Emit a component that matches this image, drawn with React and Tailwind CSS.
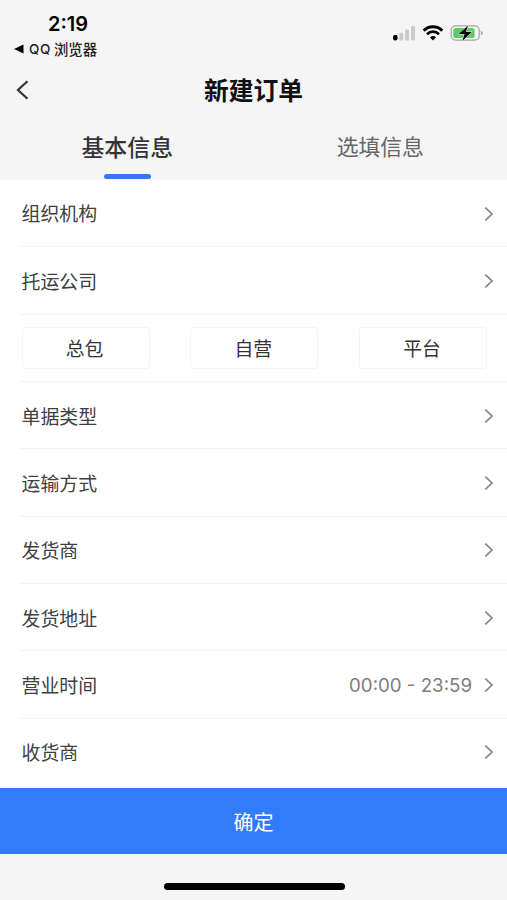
const rows = [
  { label: '组织机构' },
  { label: '托运公司' },
  { options: ['总包', '自营', '平台'] },
  { label: '单据类型' },
  { label: '运输方式' },
  { label: '发货商' },
  { label: '发货地址' },
  { label: '营业时间', value: '00:00 - 23:59' },
  { label: '收货商' },
];

function StatusIcons() {
  return (
    <svg width="92" height="20" viewBox="0 0 92 20" fill="none">
      <rect x="1" y="11" width="4.6" height="5.4" rx="1.8" fill="#000" />
      <rect x="7.3" y="8.8" width="4" height="7.6" rx="1" fill="#cbcbcb" />
      <rect x="13.1" y="5.5" width="4" height="10.9" rx="1" fill="#cbcbcb" />
      <rect x="19" y="2" width="4" height="14.4" rx="1" fill="#cbcbcb" />
      <path d="M31.7 6.6a13.2 13.2 0 0 1 18.6 0" stroke="#000" strokeWidth="3" />
      <path d="M35 10.2a8.5 8.5 0 0 1 12 0" stroke="#000" strokeWidth="2.7" />
      <path d="M38 13.4a4.3 4.3 0 0 1 6 0l-3 3z" fill="#000" />
      <rect x="59.2" y="1.9" width="28" height="14.2" rx="4.4" stroke="#a4a4a4" strokeWidth="1.2" />
      <rect x="61.2" y="3.9" width="21.4" height="10.2" rx="2.6" fill="#5fcb68" />
      <path d="M88.8 6.7q2 .8 2 2.4t-2 2.4z" fill="#a4a4a4" />
      <path d="M76.2 1.5 66.6 10h6l-2.3 7 9.5-8.9h-6z" fill="#000" stroke="#f5f5f5" strokeWidth="1" paintOrder="stroke" strokeLinejoin="round" />
    </svg>
  );
}

function Chevron() {
  return (
    <svg className="shrink-0" width="10" height="16" viewBox="0 0 10 16" fill="none">
      <path d="M1.3 1.7 8 8l-6.7 6.3" stroke="#858585" strokeWidth="1.7" />
    </svg>
  );
}

function Row({ label, value, options }) {
  return (
    <div className="ml-[19px] flex h-[67.35px] items-center border-b border-[#f3f3f3] pt-[1px] pl-[2.5px] last:border-transparent">
      {options ? (
        <div className="mr-[20px] flex flex-1 justify-between">
          {options.map((option) => (
            <button
              key={option}
              className="h-[42px] w-[128px] rounded-[3px] border border-[#f5f5f5] pt-[3px] pr-[2px] text-[18.8px] text-[#333]"
            >
              {option}
            </button>
          ))}
        </div>
      ) : (
        <>
          <span className="flex-1 pt-[4px]">{label}</span>
          {value && <span className="mr-[12px] pt-[2px] text-[18.7px] text-[#7d7d7d]">{value}</span>}
          <div className="mr-[13px]">
            <Chevron />
          </div>
        </>
      )}
    </div>
  );
}

export default function App() {
  return (
    <div className="flex h-[900px] w-[507px] flex-col overflow-hidden bg-[#f5f5f5] font-['Inter','Noto_Sans_CJK_SC',sans-serif] whitespace-nowrap text-[#404040]">
      <header className="h-[180px] shrink-0">
        <div className="flex h-[62px] justify-between">
          <div className="pl-[13px] pt-[12px] text-black">
            <div className="pl-[35px] text-[20px] leading-[24px] font-semibold">2:19</div>
            <div className="flex h-[26px] items-center text-[14.4px] font-medium text-[#222]">
              <svg className="mr-[5px]" width="11" height="10" viewBox="0 0 11 10">
                <path d="M1 5 10.5.5v9z" fill="#000" />
              </svg>
              <span className="mr-[3px] text-[13.5px] tracking-[0.6px]">QQ</span>
              <span className="pt-[1px]">浏览器</span>
            </div>
          </div>
          <div className="pt-[24px] pr-[23px]">
            <StatusIcons />
          </div>
        </div>
        <div className="grid h-[56px] grid-cols-[60px_1fr_60px] items-center">
          <svg className="ml-[16px]" width="14" height="20" viewBox="0 0 14 20" fill="none">
            <path d="M11.5 1.2 2 10l9.5 8.8" stroke="#333" strokeWidth="2.2" />
          </svg>
          <h1 className="pt-[4px] text-center text-[24.8px] font-bold text-[#111]">新建订单</h1>
        </div>
        <div className="grid h-[62px] grid-cols-2 text-center text-[22.9px]">
          <div className="flex flex-col items-center justify-between pb-[1px] pl-[1px] font-medium text-[#333]">
            <span className="pt-[13px]">基本信息</span>
            <span className="h-[5px] w-[47px] rounded-full bg-[#3478f6]" />
          </div>
          <div className="pt-[13px] text-[21.8px] text-[#666]">选填信息</div>
        </div>
      </header>
      <main className="h-[608px] shrink-0 overflow-hidden bg-white text-[18.9px]">
        {rows.map((row, index) => (
          <Row key={index} {...row} />
        ))}
      </main>
      <button className="h-[66px] shrink-0 bg-[#327bfb] pt-[3px] text-[20px] text-white">确定</button>
      <footer className="flex flex-1 justify-center pt-[29px] pl-[1px]">
        <div className="h-[7px] w-[181px] rounded-full bg-black" />
      </footer>
    </div>
  );
}
